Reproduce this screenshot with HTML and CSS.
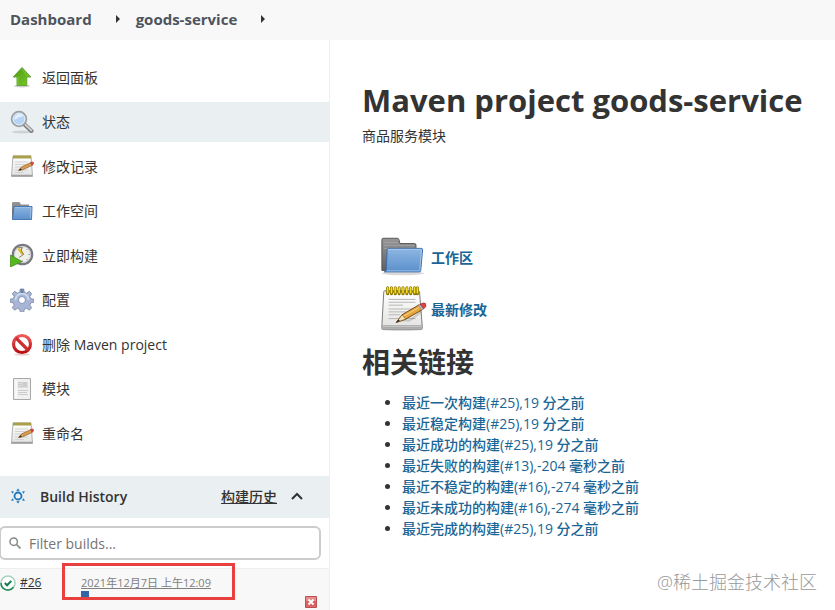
FILE: index.html
```html
<!DOCTYPE html>
<html lang="zh-CN">
<head>
    <meta charset="UTF-8">
    <meta name="viewport" content="width=device-width, initial-scale=1.0">
    <title>goods-service</title>
    <link rel="stylesheet" href="styles.css">
</head>
<body>

    <!-- shared icons -->
    <svg class="defs" width="0" height="0" aria-hidden="true">
        <defs>
            <linearGradient id="blue" x1="0" y1="0" x2="0" y2="1">
                <stop offset="0" stop-color="#8db6e2"/><stop offset="1" stop-color="#5b90cc"/>
            </linearGradient>
            <linearGradient id="grey" x1="0" y1="0" x2="0" y2="1">
                <stop offset="0" stop-color="#989898"/><stop offset="1" stop-color="#5f5f5f"/>
            </linearGradient>
            <linearGradient id="paper" x1="0" y1="0" x2="0" y2="1">
                <stop offset="0" stop-color="#ffffff"/><stop offset="1" stop-color="#e2e2e0"/>
            </linearGradient>
            <linearGradient id="green" x1="0" y1="0" x2="1" y2="1">
                <stop offset="0" stop-color="#4f9a16"/><stop offset="1" stop-color="#76cc1f"/>
            </linearGradient>
            <linearGradient id="red" x1="0" y1="0" x2="0" y2="1">
                <stop offset="0" stop-color="#ee5a5a"/><stop offset="1" stop-color="#b90f12"/>
            </linearGradient>
        </defs>
        <symbol id="folder" viewBox="0 -1 50 50">
            <ellipse cx="25" cy="41" rx="22" ry="2" fill="#000" opacity=".15"/>
            <path d="M3 38V6q0-1.500 1.500-1.500H19q1.500 0 1.800 1.500l1 4H37q1.500 0 1.500 1.500V38z" fill="url(#grey)" stroke="#555"/>
            <path d="M5 9h14M5 12h32M5 15h32" stroke="#aaa" stroke-width=".7"/>
            <path d="M8.500 16.500q.1-1.500 1.500-1.500h34q1.500 0 1.400 1.500L43.500 38q-.2 1.500-1.500 1.500H5.500Q7.300 39 7.500 37z" fill="url(#blue)" stroke="#3869a6"/>
            <path d="M9.500 17q0-1 1-1h32.700q1 0 1 1L42.500 37.500q-.1 1-1 1H8" fill="none" stroke="#b6d1ee" stroke-width=".8"/>
        </symbol>
        <symbol id="notepad" viewBox="0 -1 50 50">
            <ellipse cx="24" cy="45" rx="22" ry="2" fill="#000" opacity=".15"/>
            <path d="M6 5h35q1 0 1.200 1L45 41v3q0 1-1 1H4q-1 0-1-1v-3L5 6q0-1 1-1z" fill="url(#paper)" stroke="#777"/>
            <path d="M3 41.500h42" stroke="#999"/>
            <path d="M3.500 42.500h41v2h-41z" fill="#aaa"/>
            <path d="M10 14h28M10 17h28M10 20h15M10 24h28M10 27h18M10 30h12M10 34h28" stroke="#b4b4b4"/>
            <path d="M7 6h34" stroke="#9c8500" stroke-width="2"/>
            <path d="M9 2v6M13 2v6M17 2v6M21 2v6M25 2v6M29 2v6M33 2v6M37 2v6M40 2v6" stroke="#8d7800" stroke-width="3.200" stroke-linecap="round"/>
            <path d="M9 2v5M13 2v5M17 2v5M21 2v5M25 2v5M29 2v5M33 2v5M37 2v5M40 2v5" stroke="#f5dc22" stroke-width="1.700" stroke-linecap="round"/>
            <path d="M22 36h10l12-9" fill="none" stroke="#000" stroke-width="2" opacity=".15"/>
            <path d="M18 38l6-8L42 19.500l3.500 5-17.500 10z" fill="#e8a53c" stroke="#73450e" stroke-linejoin="round"/>
            <path d="M25.500 31.500l17-9.500" stroke="#f8d28d"/>
            <path d="M18 38l6-8 4 4.500z" fill="#f1dfba" stroke="#73450e" stroke-width=".6"/>
            <path d="M18 38l2.300-3 1.500 1.500z" fill="#222"/>
            <path d="M41 20l2-1 3.500 5-2.200 1.200z" fill="#bbb" stroke="#777" stroke-width=".5"/>
            <path d="M43 19q3.500-2.200 5.500-.7 1.500 3.500-2 5.500z" fill="#df4545" stroke="#922" stroke-width=".7"/>
        </symbol>
        <symbol id="notepad-small" viewBox="0 0 24 24">
            <path d="M3 2h18l1.500 20.500h-21z" fill="url(#paper)" stroke="#b0b0b0"/>
            <path d="M1.500 21.500h21" stroke="#a0a0a0" stroke-width="1.500"/>
            <path d="M3 1.500h18v3H3z" fill="#aaa04a"/>
            <path d="M5 8h13M5 10.500h11M5 13h7M5 16h13M5 18.500h9" stroke="#d2d2d2"/>
            <path d="M8.500 16.500l3-3.500L21 8.500l1.700 2.600-10 4.700z" fill="#dc9a4a" stroke="#8a6236" stroke-width=".7"/>
            <path d="M8.500 16.500l2-2.300 1.300 1.800z" fill="#332a22"/>
            <path d="M20.500 8.500q2.200-1.200 3 0 .5 1.500-1.300 2.700z" fill="#dc4949" stroke="#a43b35" stroke-width=".6"/>
        </symbol>
    </svg>

    <nav class="breadcrumbs" aria-label="breadcrumbs">
        <a href="#">Dashboard</a>
        <span class="arrow"></span>
        <a href="#">goods-service</a>
        <span class="arrow"></span>
    </nav>

    <div class="page">
        <aside class="side-panel">
            <nav class="tasks">
                <a class="task" href="#">
                    <svg viewBox="0 0 24 24">
                        <ellipse cx="12" cy="21" rx="8" ry="1.500" fill="#000" opacity=".2"/>
                        <path d="M12 2.500l8.800 9.500h-4v8.500H7V12H3.200z" fill="url(#green)" stroke="#64a638"/>
                        <path d="M12 4.500l6 6.500M8 12v7.500" stroke="#8dd451" stroke-width=".7"/>
                    </svg>
                    返回面板
                </a>
                <a class="task active" href="#">
                    <svg viewBox="0 0 24 24">
                        <ellipse cx="12" cy="22" rx="10" ry="1.500" fill="#000" opacity=".12"/>
                        <path d="M14.500 14.500l7 6.500" stroke="#777" stroke-width="4" stroke-linecap="round"/>
                        <path d="M15 14.500l6.500 6" stroke="#cfcfcf" stroke-width="2" stroke-linecap="round"/>
                        <circle cx="9" cy="9" r="7.200" fill="#b8d4f5" stroke="#9da0a3" stroke-width="2"/>
                        <circle cx="9" cy="9" r="6" fill="none" stroke="#f4f7fa" stroke-width=".8"/>
                        <path d="M4.500 10Q4 4.500 9.500 4q3 0 4 2-5 .5-9 4z" fill="#e4f0fe"/>
                    </svg>
                    状态
                </a>
                <a class="task" href="#">
                    <svg><use href="#notepad-small"/></svg>
                    修改记录
                </a>
                <a class="task" href="#">
                    <svg viewBox="0 0 24 24">
                        <path d="M2 20V4q0-1 1-1h6.500l1.500 2.500h8V20z" fill="url(#grey)"/>
                        <path d="M4 7.500h18L21.500 20.500H2.500z" fill="url(#blue)" stroke="#4878af"/>
                        <path d="M5 8.500h16l-.6 11" fill="none" stroke="#aecbec" stroke-width=".6"/>
                    </svg>
                    工作空间
                </a>
                <a class="task" href="#">
                    <svg viewBox="0 0 24 24">
                        <circle cx="12.500" cy="11.500" r="9.700" fill="#eeeeea" stroke="#777983" stroke-width="2.200"/>
                        <circle cx="12.500" cy="11.500" r="8" fill="none" stroke="#c6c6c6" stroke-width=".7"/>
                        <path d="M12.500 4v1.500M20 11.500h-1.500M17.500 6l-1 1M17.500 17l-1-1M12.500 19v-1.500" stroke="#999"/>
                        <path d="M8.500 5.500l4.500 6" stroke="#e1bd27" stroke-width="2.600"/>
                        <path d="M8.500 4.500h3v3.500l2 3.500-4.500 3" fill="none" stroke="#7b7140" stroke-width=".8"/>
                        <path d="M.5 12l11.500 6.500L.5 24z" fill="#55b81e" stroke="#3b8611" stroke-width=".7"/>
                    </svg>
                    立即构建
                </a>
                <a class="task" href="#">
                    <svg viewBox="0 0 24 24">
                        <path d="M10.300 1h3.400l.6 3.200 2.300 1 2.700-1.900 2.400 2.400-1.900 2.700 1 2.300 3.200.6v2.800l-3.200.7-1 2.300 1.900 2.700-2.400 2.400-2.700-1.900-2.300 1-.6 3h-3.400l-.6-3-2.300-1-2.700 1.900-2.400-2.400 1.900-2.700-1-2.300-3.200-.7v-2.800l3.200-.6 1-2.300-1.900-2.700 2.400-2.400 2.700 1.900 2.300-1z" fill="#a8b5d5" stroke="#76829d" stroke-width=".8"/>
                        <path d="M5.500 12a6.500 6.500 0 0 1 13 0" fill="none" stroke="#cbd6ef" stroke-width="2"/>
                        <circle cx="12" cy="12" r="3.500" fill="#fff" stroke="#8794b9"/>
                        <path d="M10.500 1h3v4h-3z" fill="#6683b0"/>
                    </svg>
                    配置
                </a>
                <a class="task" href="#">
                    <svg viewBox="0 0 24 24">
                        <ellipse cx="12" cy="22.500" rx="8" ry="1.200" fill="#a33" opacity=".25"/>
                        <circle cx="12" cy="12" r="8.500" fill="#fff" stroke="url(#red)" stroke-width="3.200"/>
                        <path d="M6 6l12 12" stroke="#ce2e30" stroke-width="3.200"/>
                    </svg>
                    <span>删除 <b>Maven project</b></span>
                </a>
                <a class="task" href="#">
                    <svg viewBox="0 0 24 24">
                        <path d="M3.500 1.500h17v21h-17z" fill="#f0f0f0" stroke="#a8a8a8"/>
                        <path d="M6 2.500v19" stroke="#fff"/>
                        <path d="M8 5h10v6H8z" fill="#dedede"/>
                        <path d="M12.500 5H17v5h-4.500z" fill="#cdcdcd"/>
                        <path d="M8 5.500h4M8 7.500h4M8 9.500h4M8 13.500h10M8 15.500h9M8 17.500h10" stroke="#cbcbcb"/>
                    </svg>
                    模块
                </a>
                <a class="task" href="#">
                    <svg><use href="#notepad-small"/></svg>
                    重命名
                </a>
            </nav>

            <section class="history">
                <header class="history-header">
                    <svg class="sun" viewBox="0 0 16 16">
                        <circle cx="8" cy="8" r="3.500" fill="none" stroke="#1b76b8" stroke-width="1.800"/>
                        <path d="M8 .5l1.800 2.300H6.200zM8 15.500l1.800-2.300H6.200zM1 3.200l3 .3-1.500 2.300zM15 3.200l-3 .3 1.500 2.300zM1 12.800l3-.3-1.500-2.300zM15 12.800l-3-.3 1.500-2.300z" fill="#1b76b8"/>
                    </svg>
                    <h2>Build History</h2>
                    <a href="#">构建历史</a>
                    <button class="collapse" type="button" aria-label="collapse">
                        <svg viewBox="0 0 12 8"><path d="M1 7l5-5 5 5" fill="none" stroke="#333" stroke-width="2"/></svg>
                    </button>
                </header>

                <label class="filter">
                    <svg viewBox="0 0 12 12">
                        <circle cx="4.700" cy="4.700" r="3.700" fill="none" stroke="#888" stroke-width="1.500"/>
                        <path d="M7.500 7.500l4 4" stroke="#888" stroke-width="1.700"/>
                    </svg>
                    <input type="text" placeholder="Filter builds..." aria-label="Filter builds">
                </label>

                <div class="build">
                    <svg class="status" viewBox="0 0 16 16">
                        <circle cx="8" cy="8" r="7" fill="#fff" stroke="#a5d2bd" stroke-width="1.500"/>
                        <path d="M1 8a7 7 0 0 0 12.500 4.300" fill="none" stroke="#23895b" stroke-width="1.500"/>
                        <path d="M4.800 8l2.300 2.300 4.200-4.400" fill="none" stroke="#147c4c" stroke-width="2"/>
                    </svg>
                    <a class="build-number" href="#">#26</a>
                    <div class="build-details">
                        <a href="#">2021年12月7日 上午12:09</a>
                        <div class="progress"></div>
                    </div>
                    <button class="cancel" type="button" aria-label="cancel">
                        <svg viewBox="0 0 12 12">
                            <path d="M.5.5h11v11H.5z" fill="#dc6464" stroke="#b95252"/>
                            <path d="M1 1h10v4H1z" fill="#e98b8b"/>
                            <path d="M3.500 3.500l5 5M8.500 3.500l-5 5" stroke="#fff" stroke-width="1.800"/>
                        </svg>
                    </button>
                    <div class="highlight"></div>
                </div>
            </section>
        </aside>

        <main class="main-panel">
            <h1>Maven project goods-service</h1>
            <p class="description">商品服务模块</p>

            <div class="shortcuts">
                <a href="#"><svg><use href="#folder"/></svg>工作区</a>
                <a href="#"><svg><use href="#notepad"/></svg>最新修改</a>
            </div>

            <h2>相关链接</h2>
            <ul class="permalinks">
                <li><a href="#">最近一次构建(#25),19 分之前</a></li>
                <li><a href="#">最近稳定构建(#25),19 分之前</a></li>
                <li><a href="#">最近成功的构建(#25),19 分之前</a></li>
                <li><a href="#">最近失败的构建(#13),-204 毫秒之前</a></li>
                <li><a href="#">最近不稳定的构建(#16),-274 毫秒之前</a></li>
                <li><a href="#">最近未成功的构建(#16),-274 毫秒之前</a></li>
                <li><a href="#">最近完成的构建(#25),19 分之前</a></li>
            </ul>
        </main>
    </div>

    <div class="watermark">@稀土掘金技术社区</div>

</body>
</html>
```
FILE: styles.css
```css
* {
    box-sizing: border-box;
}

body {
    margin: 0;
    min-height: 100vh;
    display: flex;
    flex-direction: column;
    position: relative;
    background-color: #fff;
    color: #333;
    font-family: "Open Sans", "Noto Sans CJK SC", sans-serif;
    font-size: 14px;
    line-height: 21px;
}

h1, h2, p, ul {
    margin: 0;
}

a {
    color: inherit;
    text-decoration: none;
}

button {
    padding: 0;
    border: none;
    background: none;
    cursor: pointer;
}

svg {
    display: block;
    flex-shrink: 0;
}

.defs {
    position: absolute;
}

.breadcrumbs {
    display: flex;
    align-items: center;
    height: 40px;
    padding: 0 10px 2px;
    background-color: #f8f8f8;
    color: #4d545d;
    font-size: 15px;
    font-weight: 700;
}

.arrow {
    margin: 0 16px 0 24px;
    border: 4px solid transparent;
    border-left-color: #333;
    border-right-width: 0;
}

.page {
    display: flex;
    flex: 1;
}

.side-panel {
    display: flex;
    flex-direction: column;
    flex: 0 0 330px;
    padding-top: 17px;
    border-right: 1px solid #eceef0;
}

.tasks {
    display: flex;
    flex-direction: column;
    justify-content: space-between;
    min-height: 396px;
    margin-bottom: 23px;
}

.task {
    display: flex;
    align-items: center;
    gap: 8px;
    height: 40px;
    padding-left: 10px;
}

.task svg {
    width: 24px;
    height: 24px;
}

.task b {
    font-weight: 500;
}

.active {
    background-color: #eaeff2;
}

.history {
    display: flex;
    flex-direction: column;
    flex: 1;
}

.history-header {
    display: flex;
    align-items: center;
    height: 42px;
    padding: 0 26px 2px 10px;
    background-color: #eaeff2;
}

.history-header h2 {
    flex: 1;
    margin-left: 14px;
    font-size: 14px;
    font-weight: 600;
}

.history-header a {
    font-weight: 500;
    text-decoration: underline;
}

.sun {
    width: 16px;
    height: 16px;
}

.collapse {
    margin-left: 14px;
}

.collapse svg {
    width: 12px;
    height: 8px;
}

.filter {
    display: flex;
    align-items: center;
    height: 34px;
    margin: 8px 8px 8px -1px;
    padding-left: 8px;
    border: 2px solid #ccc;
    border-radius: 6px;
}

.filter svg {
    width: 12px;
    height: 12px;
}

.filter input {
    flex: 1;
    min-width: 0;
    margin-left: 8px;
    padding: 0;
    border: none;
    outline: none;
    background: none;
    font: inherit;
}

.filter input::placeholder {
    color: #757575;
}

.build {
    position: relative;
    display: flex;
    align-items: flex-start;
    flex: 1;
    padding: 6px 12px 0 0;
    border-top: 1px solid #eee;
    background-color: #f8f8f8;
    font-size: 12px;
    line-height: 16px;
}

.build a {
    text-decoration: underline;
}

.status {
    width: 16px;
    height: 16px;
}

.build-number {
    width: 61px;
    margin-left: 4px;
}

.build-details {
    flex: 1;
    color: #808080;
    font-size: 11px;
}

.progress {
    width: 8px;
    height: 6px;
    background-color: #3465a4;
}

.cancel {
    align-self: flex-end;
    padding-bottom: 2px;
}

.cancel svg {
    width: 12px;
    height: 12px;
}

.highlight {
    position: absolute;
    top: -6px;
    left: 62px;
    width: 173px;
    height: 37px;
    border: 3px solid #e8403f;
    pointer-events: none;
}

.main-panel {
    flex: 1;
    min-width: 0;
    padding: 40px 32px;
}

h1 {
    font-size: 31px;
    font-weight: 700;
    line-height: 40px;
    white-space: nowrap;
}

.description {
    margin-top: 5px;
}

.shortcuts {
    display: flex;
    flex-direction: column;
    align-items: flex-start;
    gap: 4px;
    margin: 87px 0 11px 17px;
}

.shortcuts a {
    display: flex;
    align-items: center;
    gap: 4px;
}

.shortcuts svg {
    width: 48px;
    height: 48px;
}

.shortcuts a, .permalinks a {
    color: #1a6595;
    font-weight: 600;
}

.main-panel h2 {
    font-size: 28px;
    line-height: 36px;
}

.permalinks {
    margin-top: 12px;
    padding-left: 40px;
}

.permalinks a {
    font-weight: 500;
}

.watermark {
    position: absolute;
    right: 18px;
    bottom: 16px;
    color: #999;
    font-size: 18px;
    font-weight: 300;
    line-height: 24px;
}
```
